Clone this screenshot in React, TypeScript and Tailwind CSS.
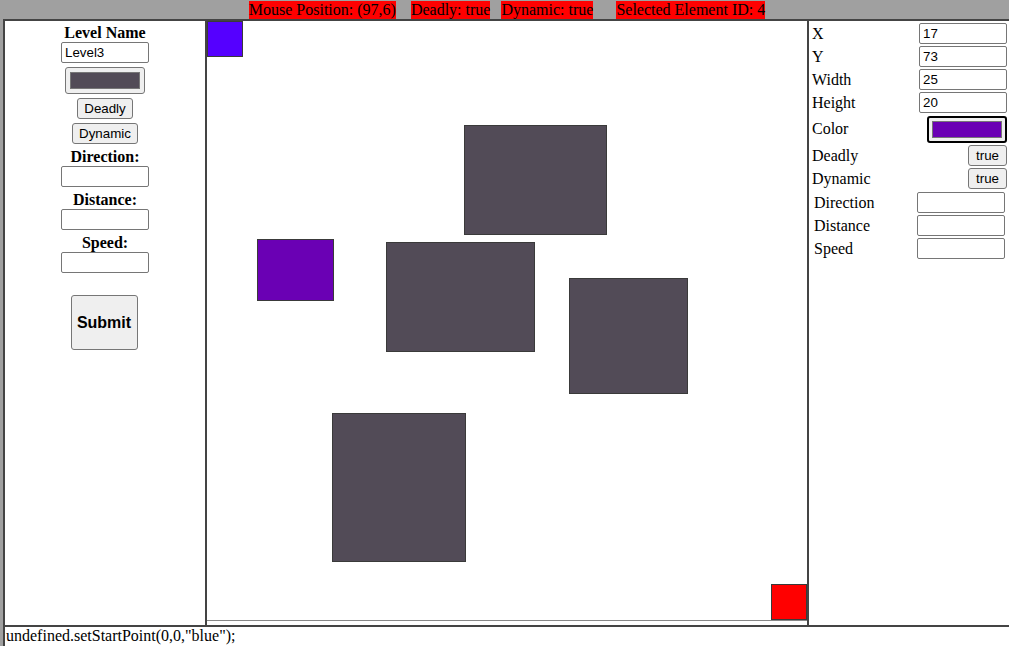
import React from "react";

const serif = "font-['Liberation_Serif',serif]";
const sans = "font-['Liberation_Sans',Arial,sans-serif]";

const inputCls = `block w-[88px] h-[21px] border border-[#767676] rounded-[2px] bg-white px-[3px] text-[13.33px] text-black ${sans}`;
const btnCls = `block h-[21px] border border-[#767676] rounded-[3px] bg-[#efefef] px-[6px] text-[13.33px] leading-none text-black ${sans}`;

type Shape = { x: number; y: number; w: number; h: number; color: string };

const shapes: Shape[] = [
  { x: 0, y: 0, w: 36, h: 36, color: "#5500ff" },
  { x: 257, y: 104, w: 143, h: 110, color: "#524b57" },
  { x: 179, y: 221, w: 149, h: 110, color: "#524b57" },
  { x: 362, y: 257, w: 119, h: 116, color: "#524b57" },
  { x: 125, y: 392, w: 134, h: 149, color: "#524b57" },
  { x: 50, y: 218, w: 77, h: 62, color: "#6a00b4" },
  { x: 564, y: 563, w: 36, h: 36, color: "#ff0000" },
];

const ColorInput = ({ color, focused }: { color: string; focused?: boolean }) => (
  <div
    className={`w-[80px] h-[27px] rounded-[3px] bg-[#efefef] flex items-center justify-center ${
      focused ? "border-2 border-black" : "border border-[#767676]"
    }`}
  >
    <div className="w-[70px] h-[17px] border border-[#777]" style={{ background: color }} />
  </div>
);

const LeftPanel = () => (
  <div className={`w-[202px] shrink-0 border-r-2 border-[#444] flex flex-col items-center ${serif}`}>
    <div className="mt-[2px] h-[19px] font-bold text-[16px] leading-[19px]">Level Name</div>
    <input className={inputCls} defaultValue="Level3" />
    <div className="mt-[4px]">
      <ColorInput color="#524b57" />
    </div>
    <button className={`${btnCls} mt-[4px]`}>Deadly</button>
    <button className={`${btnCls} mt-[4px]`}>Dynamic</button>
    <div className="mt-[3px] h-[19px] font-bold text-[16px] leading-[19px]">Direction:</div>
    <input className={inputCls} />
    <div className="mt-[3px] h-[19px] font-bold text-[16px] leading-[19px]">Distance:</div>
    <input className={inputCls} />
    <div className="mt-[3px] h-[19px] font-bold text-[16px] leading-[19px]">Speed:</div>
    <input className={inputCls} />
    <button
      className={`mt-[22px] mr-[2px] w-[67px] h-[55px] border border-[#767676] rounded-[3px] bg-[#efefef] font-bold text-[16px] text-black ${sans}`}
    >
      Submit
    </button>
  </div>
);

const Canvas = () => (
  <div className="w-[600px] shrink-0 h-full">
    <div className="relative w-[600px] h-[600px] border-b border-[#888] bg-white">
      {shapes.map((s, i) => (
        <div
          key={i}
          className="absolute border border-[#3a3a3a]"
          style={{ left: s.x, top: s.y, width: s.w, height: s.h, background: s.color }}
        />
      ))}
    </div>
  </div>
);

const PropRow = ({ label, children, h = 23 }: { label: string; children: React.ReactNode; h?: number }) => (
  <div className="flex items-center justify-between" style={{ height: h }}>
    <span className="text-[16px] leading-[18px]">{label}</span>
    {children}
  </div>
);

const RightPanel = () => (
  <div className={`w-[202px] shrink-0 border-l-2 border-[#444] ${serif}`}>
    <div className="pl-[3px] pr-[2px] pt-px">
      <PropRow label="X">
        <input className={inputCls} defaultValue="17" />
      </PropRow>
      <PropRow label="Y">
        <input className={inputCls} defaultValue="73" />
      </PropRow>
      <PropRow label="Width">
        <input className={inputCls} defaultValue="25" />
      </PropRow>
      <PropRow label="Height">
        <input className={inputCls} defaultValue="20" />
      </PropRow>
      <PropRow label="Color" h={30}>
        <ColorInput color="#6a00b4" focused />
      </PropRow>
      <PropRow label="Deadly">
        <button className={`${btnCls} h-[20px] px-[7px]`}>true</button>
      </PropRow>
      <PropRow label="Dynamic">
        <button className={`${btnCls} h-[20px] px-[7px]`}>true</button>
      </PropRow>
    </div>
    <div className="pl-[5px] pr-[4px] mt-[1px]">
      <PropRow label="Direction">
        <input className={inputCls} />
      </PropRow>
      <PropRow label="Distance">
        <input className={inputCls} />
      </PropRow>
      <PropRow label="Speed">
        <input className={inputCls} />
      </PropRow>
    </div>
  </div>
);

export default function App() {
  return (
    <div className={`w-[1009px] h-[646px] overflow-hidden bg-[#a0a0a0] text-black ${serif}`}>
      <div className="h-[19px] flex justify-center pt-px pl-[5px] text-[16px] leading-[17px]">
        <span className="bg-[#ff0000]">Mouse Position: (97,6)</span>
        <span className="bg-[#ff0000] ml-[15px]">Deadly: true</span>
        <span className="bg-[#ff0000] ml-[11px]">Dynamic: true</span>
        <span className="bg-[#ff0000] ml-[23px]">Selected Element ID: 4</span>
      </div>
      <div className="ml-[3px] w-[1006px] border-l-2 border-t-2 border-[#444] bg-white">
        <div className="flex h-[604px]">
          <LeftPanel />
          <Canvas />
          <RightPanel />
        </div>
        <div className="border-t-2 border-[#444] h-[21px] text-[16px] leading-[18px] pl-px">
          undefined.setStartPoint(0,0,"blue");
        </div>
      </div>
    </div>
  );
}
